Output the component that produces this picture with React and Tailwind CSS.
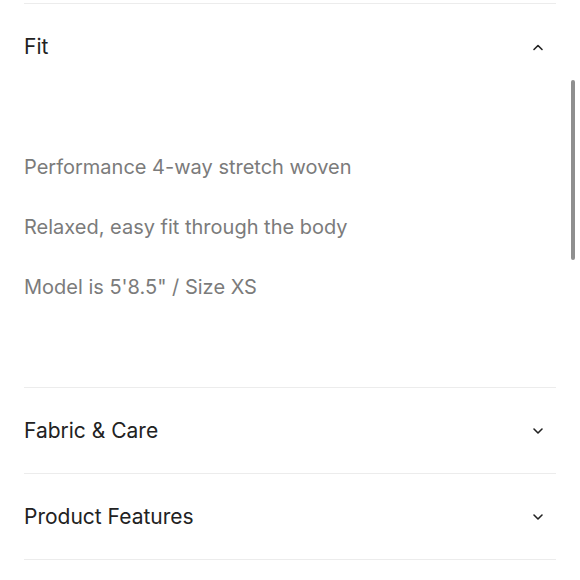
import React from 'react'

const Chevron = ({ up }) => (
    <svg width="12" height="8" viewBox="0 0 12 8" fill="none" className="text-[#222]">
        <path
            d={up ? 'M2 6.5 L6 2.5 L10 6.5' : 'M2 2 L6 6 L10 2'}
            stroke="currentColor"
            strokeWidth="1.6"
            strokeLinecap="round"
            strokeLinejoin="round"
        />
    </svg>
)

const details = ['Performance 4-way stretch woven', 'Relaxed, easy fit through the body', 'Model is 5\'8.5" / Size XS']

function Section({ title, open, children }) {
    return (
        <div className="border-t border-[#ececec]">
            <div className="flex h-[85px] items-center justify-between pr-[12px]">
                <span className="text-[21px] text-[#222]">{title}</span>
                <Chevron up={open} />
            </div>
            {open && children}
        </div>
    )
}

export default function App() {
    return (
        <div className="relative h-[580px] w-[580px] overflow-hidden bg-white font-['Inter','Liberation_Sans',sans-serif]">
            <div className="px-6 pt-[3px]">
                <Section title="Fit" open>
                    <div className="pb-[70px] pt-[48px]">
                        {details.map((d) => (
                            <p key={d} className="text-[20px] leading-[60px] text-[#7b7b7b]">
                                {d}
                            </p>
                        ))}
                    </div>
                </Section>
                <Section title="Fabric & Care" />
                <Section title="Product Features" />
                <div className="border-t border-[#ececec]" />
            </div>
            <div className="absolute right-[5px] top-[80px] h-[180px] w-[4px] rounded-full bg-[#8f8f8f]" />
        </div>
    )
}
